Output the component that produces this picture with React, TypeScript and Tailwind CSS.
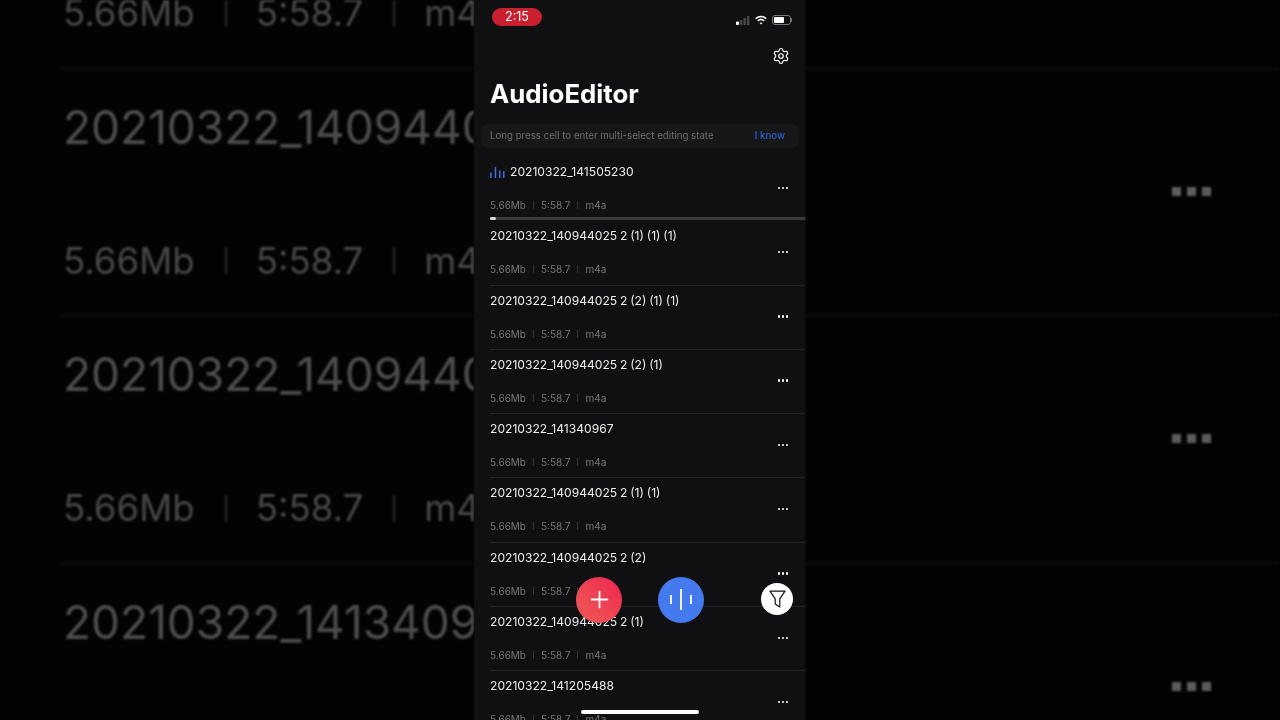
import { Plus, Settings } from "lucide-react";

const files = [
  "20210322_141505230",
  "20210322_140944025 2 (1) (1) (1)",
  "20210322_140944025 2 (2) (1) (1)",
  "20210322_140944025 2 (2) (1)",
  "20210322_141340967",
  "20210322_140944025 2 (1) (1)",
  "20210322_140944025 2 (2)",
  "20210322_140944025 2 (1)",
  "20210322_141205488",
];

function BackdropMeta() {
  return (
    <div className="flex h-[40px] items-center text-[36.6px] leading-[40px] text-[#474747]">
      <span>5.66Mb</span>
      <span className="ml-[30px] mr-[29px] h-[27px] w-[2px] shrink-0 bg-[#262626]" />
      <span>5:58.7</span>
      <span className="ml-[30px] mr-[29px] h-[27px] w-[2px] shrink-0 bg-[#262626]" />
      <span>m4a</span>
    </div>
  );
}

function BackdropLeft() {
  return (
    <div className="h-[720px] w-[474px] shrink-0 overflow-hidden whitespace-nowrap bg-[#030304] blur-[0.8px]">
      <div className="-mt-[179px] pl-[63px]">
        {["20210322_141505230", "20210322_140944025", "20210322_140944025", "20210322_141340967"].map((t, i) => (
          <div key={i} className="-ml-[3px] h-[247.6px] border-b border-[#171717] pl-[3px] pt-[30px]">
            <div className="h-[56px] text-[46px] leading-[56px] text-[#4d4d4d]">{t}</div>
            <div className="mt-[86px]">
              <BackdropMeta />
            </div>
          </div>
        ))}
      </div>
    </div>
  );
}

function BackdropRight() {
  return (
    <div className="h-[720px] w-[474px] shrink-0 overflow-hidden bg-[#030304] blur-[0.8px]">
      <div className="-mt-[179px]">
        {[0, 1, 2, 3].map((i) => (
          <div key={i} className="flex h-[247.6px] items-start justify-end border-b border-[#171717] pr-[69px] pt-[118px]">
            <div className="flex gap-[6px]">
              <span className="size-[9px] bg-[#5c5c5c]" />
              <span className="size-[9px] bg-[#5c5c5c]" />
              <span className="size-[9px] bg-[#5c5c5c]" />
            </div>
          </div>
        ))}
      </div>
    </div>
  );
}

function StatusIcons() {
  return (
    <div className="flex items-center gap-[5px]">
      <svg width="14" height="9" viewBox="0 0 14 9">
        <rect x="0" y="5.500" width="3" height="3.500" rx="1" fill="#fff" />
        <rect x="3.800" y="4" width="2.400" height="5" rx="0.6" fill="#4a4a4c" />
        <rect x="7.400" y="2" width="2.400" height="7" rx="0.6" fill="#4a4a4c" />
        <rect x="11" y="0" width="2.400" height="9" rx="0.6" fill="#4a4a4c" />
      </svg>
      <svg width="12" height="10" viewBox="0 0 12 10" fill="none" stroke="#fff" strokeWidth="1.600">
        <path d="M.8 3.600C3.800.8 8.200.8 11.200 3.600" />
        <path d="M2.900 5.800C4.700 4.200 7.300 4.200 9.100 5.800" />
        <path d="M6 9.600 4.500 8C5.400 7.200 6.600 7.200 7.500 8Z" fill="#fff" stroke="none" />
      </svg>
      <div className="flex items-center">
        <div className="h-[10px] w-[19px] rounded-[3px] border border-[#77777a] p-[1px]">
          <div className="h-full w-[10px] rounded-[1px] bg-white" />
        </div>
        <div className="h-[4px] w-[1px] rounded-r-sm bg-[#77777a]" />
      </div>
    </div>
  );
}

function PlayingBars() {
  return (
    <svg width="15" height="12" viewBox="0 0 15 12" fill="#3f6fd8">
      <rect x="0.200" y="6.500" width="1.500" height="5.500" />
      <rect x="4.700" y="1" width="1.500" height="11" />
      <rect x="9" y="4.500" width="1.500" height="7.500" />
      <rect x="13" y="5" width="1.500" height="7" />
    </svg>
  );
}

function FileRow({ name, index }: { name: string; index: number }) {
  const playing = index === 0;
  return (
    <div className={`relative h-[64.3px] pt-[6px] ${playing ? "pl-4" : "ml-4 border-b border-[#252528]"}`}>
      <div className="flex h-[18px] items-center gap-[5px] text-[12.1px] leading-[18px] text-[#ececec] [word-spacing:-0.6px]">
        {playing && <PlayingBars />}
        <span>{name}</span>
      </div>
      <div className="mt-[17px] flex h-[14px] items-center text-[10px] leading-[14px] text-[#77777a]">
        <span>5.66Mb</span>
        <span className="mx-[7px] h-[8px] w-px bg-[#333336]" />
        <span>5:58.7</span>
        <span className="mx-[7px] h-[8px] w-px bg-[#333336]" />
        <span>m4a</span>
      </div>
      <div className="absolute right-[18px] top-[29.5px] flex gap-[1.500px]">
        <span className="size-[2.500px] rounded-[1px] bg-white" />
        <span className="size-[2.500px] rounded-[1px] bg-white" />
        <span className="size-[2.500px] rounded-[1px] bg-white" />
      </div>
      {playing && (
        <div className="absolute bottom-[1px] left-4 right-0 h-[3px] bg-[#3a3a3c]">
          <div className="h-full w-[6px] rounded-full bg-[#d8d8d8]" />
        </div>
      )}
    </div>
  );
}

function Phone() {
  return (
    <div className="relative h-[720px] w-[332px] shrink-0 overflow-hidden bg-[#101013] blur-[0.3px]">
      <div className="flex h-[40px] items-start justify-between pl-[18px] pr-[14px] pt-[8px]">
        <div className="flex h-[18px] w-[50px] items-center justify-center rounded-full bg-[#c9202f] text-[12.5px] text-white">
          2:15
        </div>
        <div className="pt-[7px]">
          <StatusIcons />
        </div>
      </div>
      <div className="flex h-[32px] items-center justify-end pr-[16px]">
        <Settings size={18} strokeWidth={1.6} className="text-white" />
      </div>
      <h1 className="pl-4 pt-[5px] text-[25.8px] font-bold leading-[34px] text-white">AudioEditor</h1>
      <div className="mx-[7px] mt-[13px] flex h-[24px] items-center justify-between rounded-[7px] bg-[#17171a] pl-[9px] pr-[14px] text-[9.700px]">
        <span className="text-[#6e6e72]">Long press cell to enter multi-select editing state</span>
        <span className="font-medium text-[#2a5fc9]">I know</span>
      </div>
      <div className="mt-[9px]">
        {files.map((f, i) => (
          <FileRow key={f} name={f} index={i} />
        ))}
      </div>

      {/* floating buttons */}
      <div className="absolute left-[102px] top-[576.500px] flex size-[46px] items-center justify-center rounded-full bg-gradient-to-tr from-[#ee5b55] to-[#ee1c50]">
        <Plus size={27} strokeWidth={1.6} className="text-white" />
      </div>
      <div className="absolute left-[184px] top-[576.500px] flex size-[46px] items-center justify-center gap-[8px] rounded-full bg-[#4579ee]">
        <span className="h-[9px] w-[2px] bg-white/90" />
        <span className="h-[21px] w-[2px] bg-white/90" />
        <span className="h-[9px] w-[2px] bg-white/90" />
      </div>
      <div className="absolute left-[287px] top-[583px] flex size-[32px] items-center justify-center rounded-full bg-white">
        <svg width="17" height="18" viewBox="0 0 17 18" fill="none" stroke="#111114" strokeWidth="1.200" strokeLinejoin="round">
          <path d="M1 1.200H16L10.800 8.800V17L6.200 14V8.800Z" />
        </svg>
      </div>
      <div className="absolute bottom-[6px] left-[107px] h-[4px] w-[118px] rounded-full bg-white" />
    </div>
  );
}

export default function App() {
  return (
    <div className="flex h-[720px] w-[1280px] overflow-hidden bg-black font-['Inter',sans-serif]">
      <BackdropLeft />
      <Phone />
      <BackdropRight />
    </div>
  );
}
